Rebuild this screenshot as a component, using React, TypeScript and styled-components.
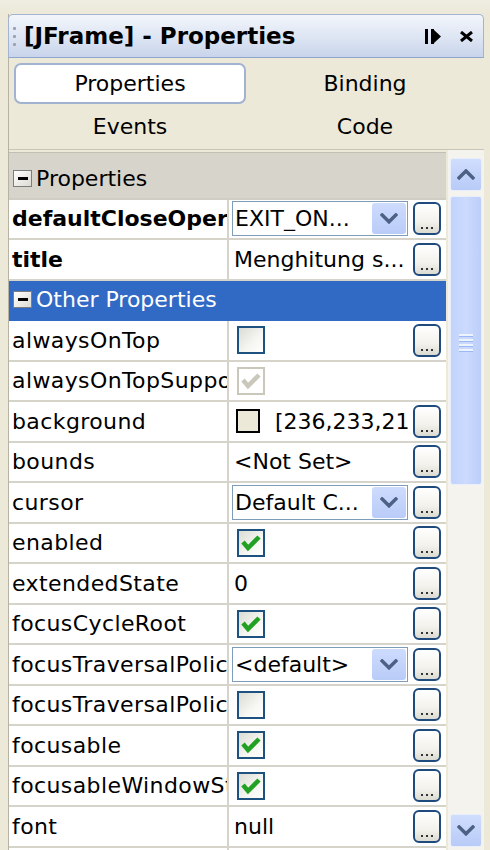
import { FC } from 'react';
import styled, { createGlobalStyle } from 'styled-components';

const GlobalStyle = createGlobalStyle`
  html, body {
    margin: 0;
    padding: 0;
  }
  body {
    background: #ece9d8;
    font-family: 'DejaVu Sans', Verdana, sans-serif;
    overflow: hidden;
  }
`;

const Page = styled.div`
  width: 490px;
  height: 850px;
  box-sizing: border-box;
  padding-top: 14px;
  background: linear-gradient(#efede3, #ece9d8 14px);
  overflow: hidden;
`;

const Window = styled.div`
  margin-left: 8px;
  width: 476px;
  height: 836px;
  display: flex;
  flex-direction: column;
  border-left: 1px solid #b6b3a4;
  box-sizing: border-box;
`;

const TitleBar = styled.div`
  height: 44px;
  flex-shrink: 0;
  display: flex;
  align-items: center;
  box-sizing: border-box;
  margin-left: -1px;
  border: 1px solid #a3b4d3;
  border-bottom-color: #8fa5cc;
  border-radius: 5px 5px 0 0;
  background: linear-gradient(#f2f5fb, #dde5f3 55%, #c8d4eb);
  padding: 0 10px 0 4px;
`;

const Grip = styled.div`
  display: flex;
  flex-direction: column;
  gap: 5px;
  margin-right: 8px;

  span {
    width: 3px;
    height: 3px;
    background: #9aa3b3;
    border-radius: 1px;
  }
`;

const Title = styled.div`
  flex: 1;
  font-weight: bold;
  font-size: 23px;
  color: #000;
  white-space: nowrap;
`;

const TitleIcons = styled.div`
  display: flex;
  align-items: center;
  gap: 16px;
`;

const Tabs = styled.div`
  height: 92px;
  flex-shrink: 0;
  display: grid;
  grid-template-columns: 232px 1fr;
  grid-template-rows: 41px 41px;
  row-gap: 2px;
  padding: 5px 0 0 5px;
  box-sizing: border-box;
  border-bottom: 1px solid #c9c6b8;
`;

const Tab = styled.div<{ $active?: boolean }>`
  display: flex;
  align-items: center;
  justify-content: center;
  font-size: 22px;
  color: #000;
  box-sizing: border-box;
  border: 2px solid ${(p) => (p.$active ? '#a2b3d1' : 'transparent')};
  border-radius: 7px;
  background: ${(p) => (p.$active ? '#ffffff' : 'transparent')};
`;

const SheetArea = styled.div`
  flex: 1;
  min-height: 0;
  display: flex;
  overflow: hidden;
`;

const Sheet = styled.div`
  width: 438px;
  margin-top: 2px;
  padding-top: 6px;
  border-top: 1px solid #c2bfb2;
  background: #d7d4cc;
  overflow: hidden;
`;

const GroupRow = styled.div<{ $selected?: boolean }>`
  height: 40.5px;
  box-sizing: border-box;
  display: flex;
  align-items: center;
  gap: 4px;
  padding-left: 4px;
  font-size: 22px;
  color: ${(p) => (p.$selected ? '#ffffff' : '#000000')};
  background: ${(p) => (p.$selected ? '#316ac5' : '#d7d4cc')};
  border-bottom: 2px solid ${(p) => (p.$selected ? '#316ac5' : '#d0cdc4')};
`;

const Expander = styled.span`
  width: 19px;
  height: 17px;
  box-sizing: border-box;
  border: 1px solid #7d7d7d;
  background: linear-gradient(135deg, #ffffff, #dcdad2);
  display: flex;
  align-items: center;
  justify-content: center;

  &::after {
    content: '';
    width: 10px;
    height: 3px;
    background: #000;
  }
`;

const PropRow = styled.div`
  height: 40.5px;
  box-sizing: border-box;
  display: grid;
  grid-template-columns: 220px 1fr;
  background: #ffffff;
  border-bottom: 2px solid #d6d3ca;
`;

const Label = styled.div<{ $bold?: boolean }>`
  display: flex;
  align-items: center;
  padding-left: 3px;
  font-size: 22px;
  letter-spacing: ${(p) => (p.$bold ? '0' : '0.4px')};
  font-weight: ${(p) => (p.$bold ? 'bold' : 'normal')};
  white-space: nowrap;
  overflow: hidden;
  border-right: 2px solid #d6d3ca;
`;

const ValueCell = styled.div`
  display: flex;
  align-items: center;
  padding: 0 5px 0 3px;
  gap: 5px;
  min-width: 0;
`;

const ValueText = styled.div`
  flex: 1;
  min-width: 0;
  font-size: 22px;
  white-space: nowrap;
  overflow: hidden;
  padding-left: 2px;
`;

const Combo = styled.div`
  flex: 1;
  height: 35px;
  box-sizing: border-box;
  display: flex;
  align-items: center;
  border: 1px solid #7f9db9;
  background: #ffffff;
  font-size: 22px;
  white-space: nowrap;
  padding-left: 2px;
  overflow: hidden;
`;

const ComboText = styled.span`
  flex: 1;
  min-width: 0;
  overflow: hidden;
`;

const DropButton = styled.span`
  width: 34px;
  height: 31px;
  flex-shrink: 0;
  margin-right: 1px;
  border-radius: 3px;
  background: linear-gradient(#cddbfd, #b9ccf8);
  display: flex;
  align-items: center;
  justify-content: center;
`;

const EditButton = styled.div`
  width: 28px;
  height: 33px;
  flex-shrink: 0;
  margin-left: auto;
  box-sizing: border-box;
  border: 2px solid #1f4a7d;
  border-radius: 6px;
  background: linear-gradient(#ffffff, #f3f2ec 60%, #dcdbd2);
  display: flex;
  align-items: flex-end;
  justify-content: center;
  gap: 3px;
  padding-bottom: 4px;

  span {
    width: 2px;
    height: 2px;
    background: #333;
  }
`;

const CheckBox = styled.div<{ $disabled?: boolean }>`
  width: 28px;
  height: 28px;
  margin-left: 5px;
  box-sizing: border-box;
  border: 2px solid ${(p) => (p.$disabled ? '#cac8bb' : '#1c5180')};
  background: ${(p) =>
    p.$disabled ? '#ffffff' : 'linear-gradient(135deg, #dcdcd6, #f6f6f2 60%, #ffffff)'};
  display: flex;
  align-items: center;
  justify-content: center;
`;

const Swatch = styled.div<{ $color: string }>`
  width: 24px;
  height: 24px;
  margin: 0 8px 0 4px;
  flex-shrink: 0;
  box-sizing: border-box;
  border: 2px solid #000;
  background: ${(p) => p.$color};
`;

const ScrollBar = styled.div`
  width: 36px;
  margin-left: 2px;
  display: flex;
  flex-direction: column;
  padding: 8px 2px 3px;
  box-sizing: border-box;
  background: #f4f3ee;
`;

const ScrollButton = styled.div`
  height: 33px;
  flex-shrink: 0;
  box-sizing: border-box;
  border: 1px solid #e8eefc;
  border-radius: 3px;
  background: linear-gradient(#d0ddfd, #b8cbf7);
  display: flex;
  align-items: center;
  justify-content: center;
`;

const Thumb = styled.div`
  height: 289px;
  margin-top: 5px;
  box-sizing: border-box;
  border: 1px solid #e8eefc;
  border-radius: 3px;
  background: linear-gradient(90deg, #c2d3fc, #cbdafd 50%, #bccffa);
  display: flex;
  flex-direction: column;
  align-items: center;
  justify-content: center;
  gap: 2px;
  padding-top: 4px;

  span {
    width: 14px;
    height: 2px;
    background: #eef4fe;
    border-bottom: 1px solid #9bb8f5;
  }
`;

const Track = styled.div`
  flex: 1;
`;

const Chevron: FC<{ up?: boolean; size?: number }> = ({ up, size = 18 }) => (
  <svg width={size} height={size * 0.6} viewBox="0 0 18 11">
    <polyline
      points={up ? '2,9 9,2 16,9' : '2,2 9,9 16,2'}
      fill="none"
      stroke="#4d6185"
      strokeWidth="3.5"
      strokeLinecap="square"
    />
  </svg>
);

const Tick: FC<{ color: string }> = ({ color }) => (
  <svg width="20" height="18" viewBox="0 0 20 18">
    <polyline points="2,8 7,14 18,3" fill="none" stroke={color} strokeWidth="4.5" />
  </svg>
);

type Value =
  | { kind: 'combo'; text: string }
  | { kind: 'text'; text: string }
  | { kind: 'check'; checked: boolean; disabled?: boolean }
  | { kind: 'color'; color: string; text: string };

interface Prop {
  name: string;
  bold?: boolean;
  value: Value;
  edit: boolean;
}

const mainProps: Prop[] = [
  { name: 'defaultCloseOperation', bold: true, value: { kind: 'combo', text: 'EXIT_ON...' }, edit: true },
  { name: 'title', bold: true, value: { kind: 'text', text: 'Menghitung s...' }, edit: true },
];

const otherProps: Prop[] = [
  { name: 'alwaysOnTop', value: { kind: 'check', checked: false }, edit: true },
  { name: 'alwaysOnTopSupported', value: { kind: 'check', checked: true, disabled: true }, edit: false },
  { name: 'background', value: { kind: 'color', color: '#ece9d8', text: '[236,233,216]' }, edit: true },
  { name: 'bounds', value: { kind: 'text', text: '<Not Set>' }, edit: true },
  { name: 'cursor', value: { kind: 'combo', text: 'Default C...' }, edit: true },
  { name: 'enabled', value: { kind: 'check', checked: true }, edit: true },
  { name: 'extendedState', value: { kind: 'text', text: '0' }, edit: true },
  { name: 'focusCycleRoot', value: { kind: 'check', checked: true }, edit: true },
  { name: 'focusTraversalPolicy', value: { kind: 'combo', text: '<default>' }, edit: true },
  { name: 'focusTraversalPolicyProvider', value: { kind: 'check', checked: false }, edit: true },
  { name: 'focusable', value: { kind: 'check', checked: true }, edit: true },
  { name: 'focusableWindowState', value: { kind: 'check', checked: true }, edit: true },
  { name: 'font', value: { kind: 'text', text: 'null' }, edit: true },
  { name: 'foreground', value: { kind: 'color', color: '#000000', text: '[0,0,0]' }, edit: true },
];

const ValueView: FC<{ value: Value }> = ({ value }) => {
  switch (value.kind) {
    case 'combo':
      return (
        <Combo>
          <ComboText>{value.text}</ComboText>
          <DropButton>
            <Chevron />
          </DropButton>
        </Combo>
      );
    case 'text':
      return <ValueText>{value.text}</ValueText>;
    case 'check':
      return (
        <CheckBox $disabled={value.disabled}>
          {value.checked && <Tick color={value.disabled ? '#cac8bb' : '#21a121'} />}
        </CheckBox>
      );
    case 'color':
      return (
        <>
          <Swatch $color={value.color} />
          <ValueText>{value.text}</ValueText>
        </>
      );
  }
};

const PropertyRow: FC<{ prop: Prop }> = ({ prop }) => (
  <PropRow>
    <Label $bold={prop.bold}>{prop.name}</Label>
    <ValueCell>
      <ValueView value={prop.value} />
      {prop.edit && (
        <EditButton>
          <span />
          <span />
          <span />
        </EditButton>
      )}
    </ValueCell>
  </PropRow>
);

const App: FC = () => {
  return (
    <Page>
      <GlobalStyle />
      <Window>
        <TitleBar>
          <Grip>
            <span />
            <span />
            <span />
          </Grip>
          <Title>[JFrame] - Properties</Title>
          <TitleIcons>
            <svg width="20" height="17" viewBox="0 0 20 17">
              <rect x="1" y="1" width="3" height="15" fill="#000" />
              <rect x="7" y="1" width="3" height="15" fill="#000" />
              <polygon points="10,2 17,8.5 10,15" fill="#000" />
            </svg>
            <svg width="13" height="11" viewBox="0 0 13 11">
              <path d="M1 1 L12 10 M12 1 L1 10" stroke="#000" strokeWidth="3" />
            </svg>
          </TitleIcons>
        </TitleBar>

        <Tabs>
          <Tab $active>Properties</Tab>
          <Tab>Binding</Tab>
          <Tab>Events</Tab>
          <Tab>Code</Tab>
        </Tabs>

        <SheetArea>
          <Sheet>
            <GroupRow>
              <Expander />
              Properties
            </GroupRow>
            {mainProps.map((p) => (
              <PropertyRow key={p.name} prop={p} />
            ))}
            <GroupRow $selected>
              <Expander />
              Other Properties
            </GroupRow>
            {otherProps.map((p) => (
              <PropertyRow key={p.name} prop={p} />
            ))}
          </Sheet>
          <ScrollBar>
            <ScrollButton>
              <Chevron up />
            </ScrollButton>
            <Thumb>
              <span />
              <span />
              <span />
              <span />
            </Thumb>
            <Track />
            <ScrollButton>
              <Chevron />
            </ScrollButton>
          </ScrollBar>
        </SheetArea>
      </Window>
    </Page>
  );
};

export default App;
